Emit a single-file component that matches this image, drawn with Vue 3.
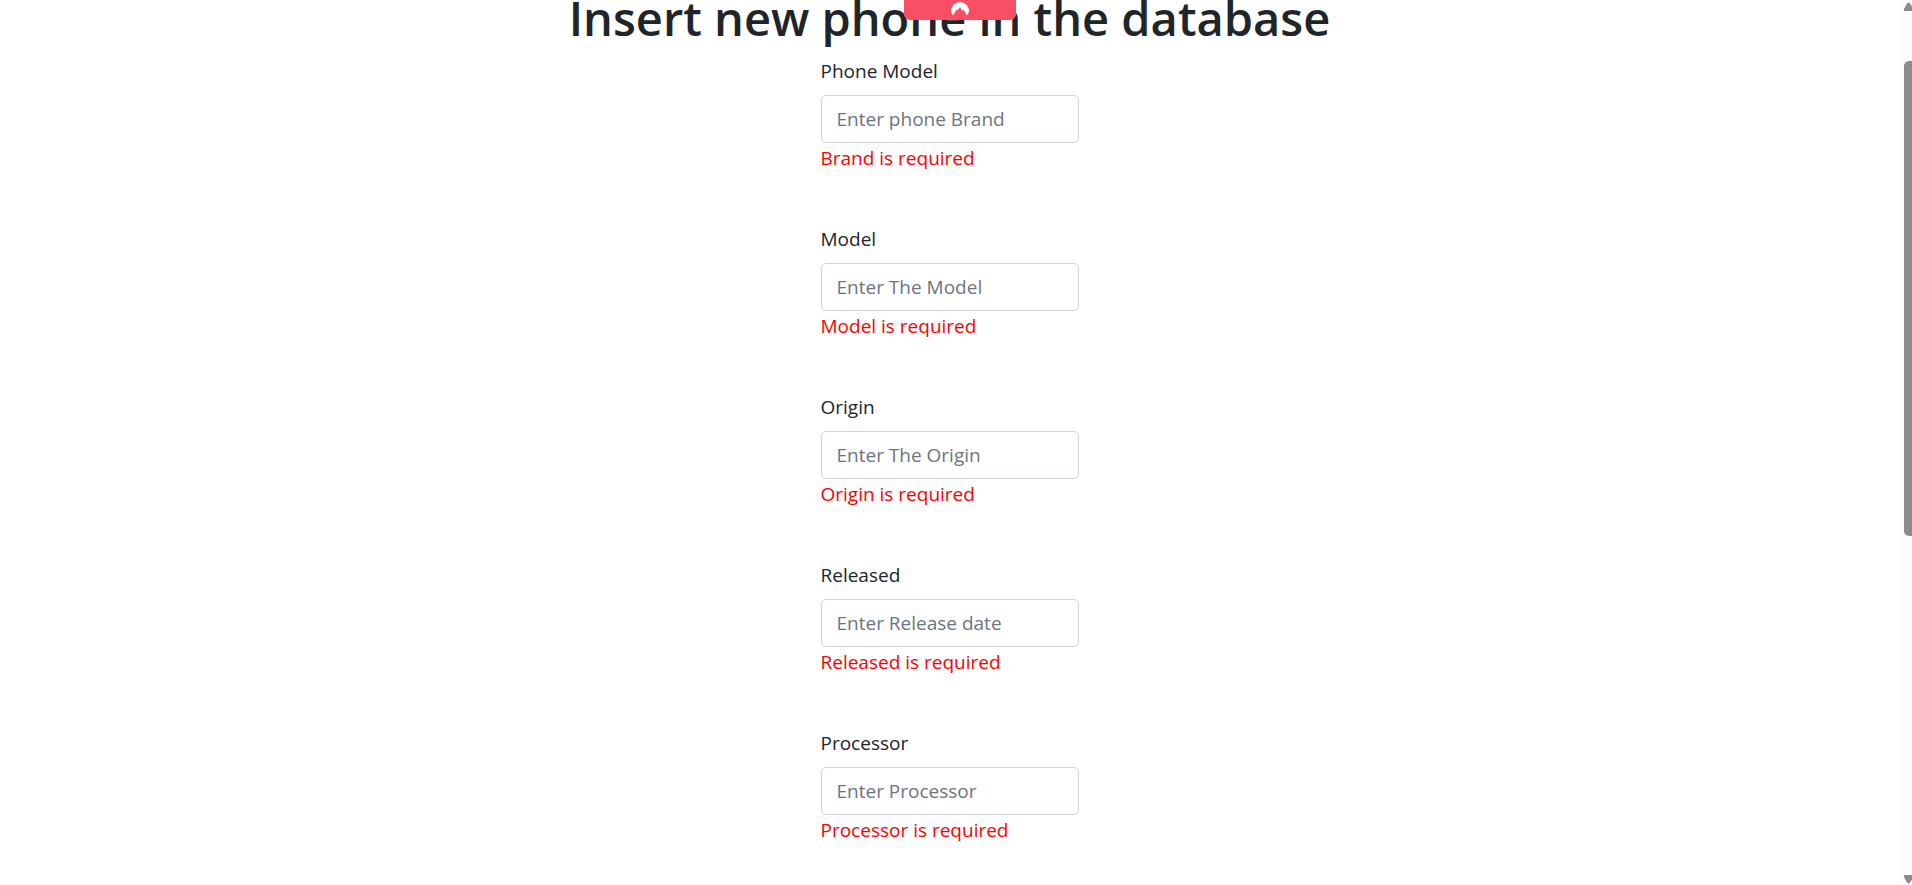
<script setup>
import { reactive } from 'vue'

const fields = reactive([
  { id: 'brand', label: 'Phone Model', placeholder: 'Enter phone Brand', error: 'Brand is required', value: '' },
  { id: 'model', label: 'Model', placeholder: 'Enter The Model', error: 'Model is required', value: '' },
  { id: 'origin', label: 'Origin', placeholder: 'Enter The Origin', error: 'Origin is required', value: '' },
  { id: 'released', label: 'Released', placeholder: 'Enter Release date', error: 'Released is required', value: '' },
  { id: 'processor', label: 'Processor', placeholder: 'Enter Processor', error: 'Processor is required', value: '' }
])
</script>

<template>
  <div class="page">
    <main class="content">
      <h1 class="title">Insert new phone in the database</h1>
      <form class="form" novalidate @submit.prevent>
        <div v-for="field in fields" :key="field.id" class="field">
          <label class="label" :for="field.id">{{ field.label }}</label>
          <input
            :id="field.id"
            v-model="field.value"
            class="input"
            type="text"
            :placeholder="field.placeholder"
            :aria-describedby="field.id + '-error'"
          />
          <span :id="field.id + '-error'" class="error">{{ field.error }}</span>
        </div>
      </form>
    </main>

    <div class="scrollbar" aria-hidden="true">
      <svg class="arrow" viewBox="0 0 8 9"><path d="M0 9V7L3 1.5Q4.500 -.5 6 1.500L8 4.500V9Z" fill="#8b8b8b" /></svg>
      <div class="track"><div class="thumb"></div></div>
      <svg class="arrow" viewBox="0 0 8 9"><path d="M0 0H8V4.500L6 7.500Q4.500 9.500 3 7.500L0 2Z" fill="#8b8b8b" /></svg>
    </div>

    <div class="tab" aria-hidden="true">
      <svg class="tab-icon" viewBox="0 0 18 14">
        <path d="M2 13.500A9 9 0 0 1 0 9A9 9 0 0 1 18 9A9 9 0 0 1 16 13.500L12.400 7.500L11.300 9L9 5L6.500 8.500L5.700 7.500Z" fill="#fff" />
      </svg>
    </div>
  </div>
</template>

<style>
body {
  margin: 0;
  background: #fff;
}
</style>

<style scoped>
.page {
  display: flex;
  height: 100vh;
  overflow: hidden;
  color: #212529;
  font-family: "Segoe UI", "Open Sans", "Noto Sans", sans-serif;
  font-size: 19px;
  line-height: 30px;
}

.content {
  flex: 1;
  display: flex;
  flex-direction: column;
  align-items: center;
}

.title {
  flex: none;
  margin: -12px 0 8px;
  font-size: 47px;
  font-weight: 600;
  line-height: 60px;
  white-space: nowrap;
}

.form {
  display: flex;
  flex-direction: column;
  gap: 51px;
  width: 258px;
}

.field {
  display: flex;
  flex-direction: column;
}

.label {
  margin-bottom: 9px;
}

.input {
  box-sizing: border-box;
  width: 100%;
  height: 48px;
  padding: 8px 15px;
  border: 1px solid #ced4da;
  border-radius: 5px;
  background: #fff;
  color: #212529;
  font: inherit;
}

.input::placeholder {
  color: #6c757d;
  opacity: 1;
}

.error {
  color: #f00;
}

.scrollbar {
  box-sizing: border-box;
  flex: none;
  display: flex;
  flex-direction: column;
  width: 13px;
  padding: 2px 0 1px 5px;
  background: #fcfcfc;
}

.arrow {
  flex: none;
  width: 8px;
  height: 9px;
}

.track {
  flex: 1;
  padding-top: 50px;
}

.thumb {
  height: calc(100% * 7 / 12);
  border-radius: 5px 0 0 5px;
  background: #8b8b8b;
}

.tab {
  position: fixed;
  top: 0;
  left: 904px;
  display: flex;
  justify-content: center;
  width: 112px;
  height: 20px;
  border-radius: 0 0 6px 6px;
  background: #f84f65;
}

.tab-icon {
  width: 18px;
  height: 14px;
  margin-top: 2px;
}
</style>
